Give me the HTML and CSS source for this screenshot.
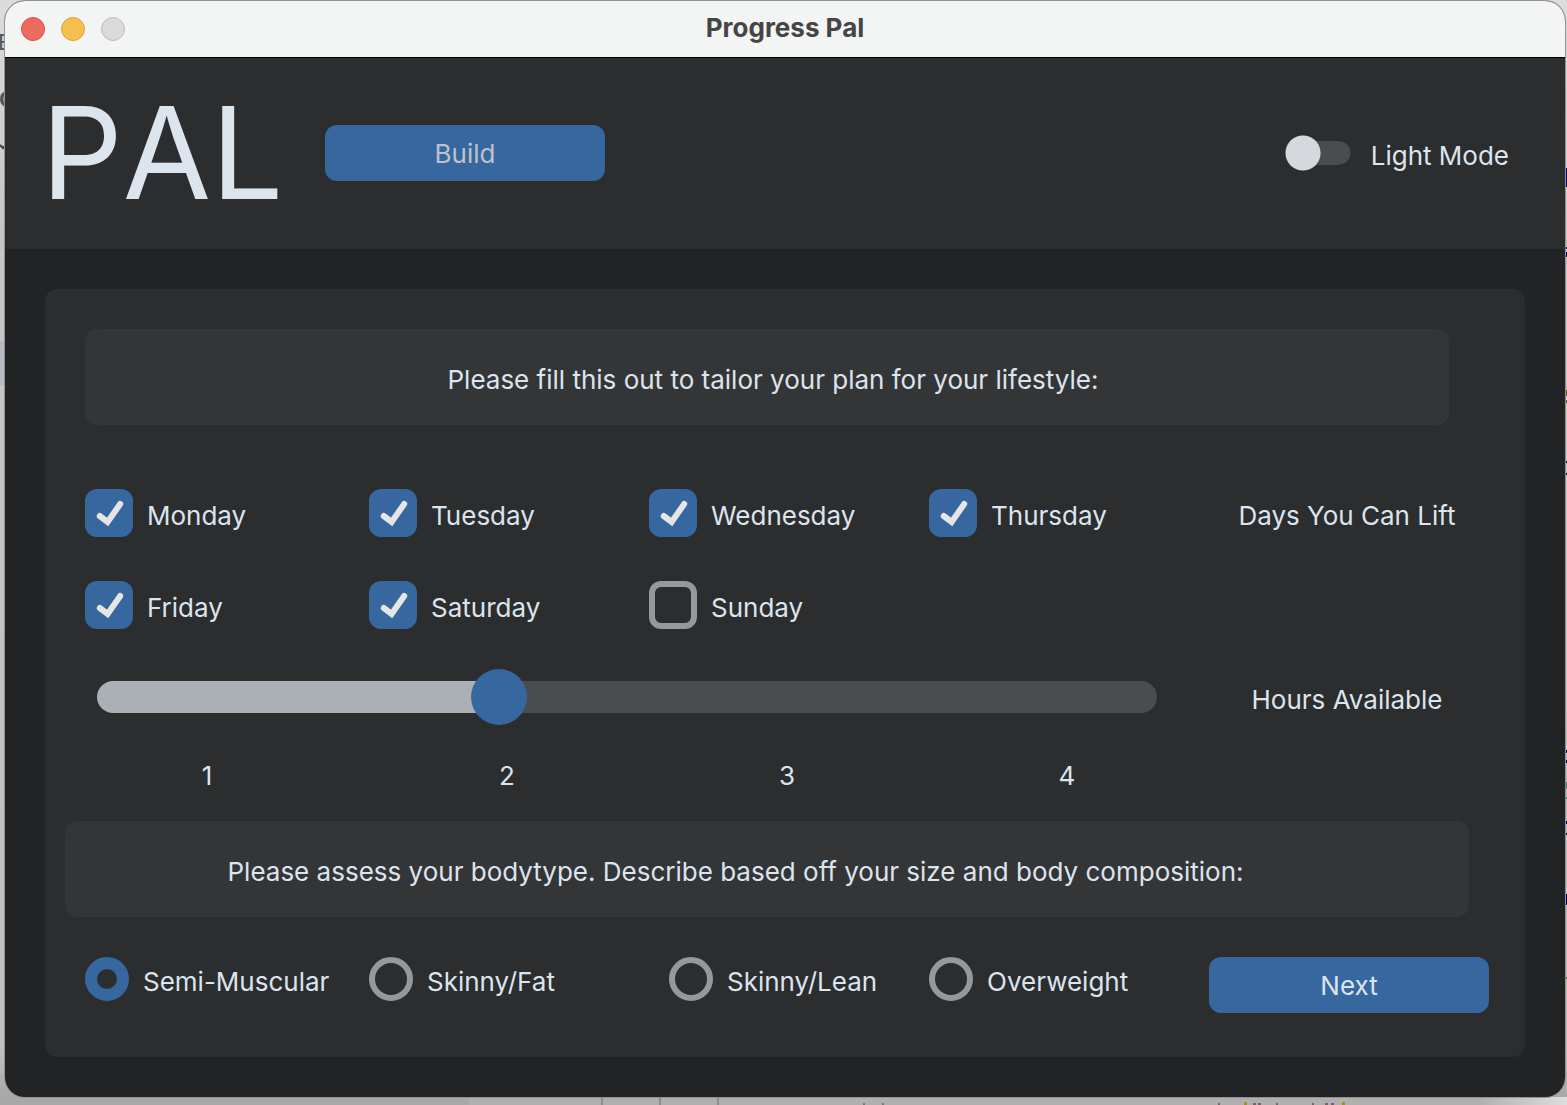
FILE: index.html
```html
<!DOCTYPE html>
<html lang="en">
<head>
<meta charset="utf-8">
<title>Progress Pal</title>
<link rel="stylesheet" href="styles.css">
</head>
<body>
<div class="backdrop" aria-hidden="true">
  <span class="peek peek-e">E</span>
  <span class="peek peek-c">C</span>
  <svg class="peek-chevron" width="5" height="8" viewBox="0 0 5 8"><path d="M0 2l3 3 3-3" fill="none" stroke="#444" stroke-width="2"/></svg>
  <div class="peek-selection"></div>
  <svg class="peek-right" width="2" height="860" viewBox="0 0 2 860">
    <path fill="#000055" d="M0 18h2v19H0zM0 97h2v2H0zM0 102h2v5H0zM0 311h2v2H0zM0 323h2v2H0zM0 600h2v3H0zM0 610h2v3H0zM0 671h2v3H0zM0 683h2v2H0zM0 744h2v11H0z"/>
    <path fill="#6b5528" d="M0 240h2v6H0zM0 250h2v3H0z"/>
    <path fill="#3d8060" d="M0 632h2v7H0zM0 647h2v2H0z"/>
    <path fill="#2f7a20" d="M0 827h2v2H0z"/>
  </svg>
  <div class="peek-editor"></div>
  <svg class="peek-bottom" width="900" height="8" viewBox="0 0 900 8">
    <path fill="#8c8c8c" d="M141 0h2v8h-2zM199 0h2v8h-2zM257 0h2v8h-2z"/>
    <path fill="#707a80" d="M403 6h2v2h-2zM422 6h2v2h-2z"/>
    <path fill="#a8901f" d="M784 5h3v3h-3zM882 5h3v3h-3z"/>
    <path fill="#806068" d="M758 6h2v2h-2zM793 6h3v2h-3zM798 6h3v2h-3zM816 6h2v2h-2zM852 6h2v2h-2zM865 6h3v2h-3zM871 6h3v2h-3z"/>
  </svg>
</div>
<main class="window">
  <div class="titlebar">
    <div class="lights">
      <button class="light light-close" aria-label="Close"></button>
      <button class="light light-min" aria-label="Minimize"></button>
      <button class="light light-zoom" aria-label="Zoom" disabled></button>
    </div>
    <div class="title">Progress Pal</div>
  </div>
  <header class="header">
    <h1 class="logo">PAL</h1>
    <button class="button button-build">Build</button>
    <label class="mode"><input class="switch" type="checkbox" role="switch"><span class="caption">Light Mode</span></label>
  </header>
  <form class="panel">
    <p class="banner banner-plan">Please fill this out to tailor your plan for your lifestyle:</p>
    <div class="grid days">
      <label class="option"><input class="check" type="checkbox" checked><span class="caption">Monday</span></label>
      <label class="option"><input class="check" type="checkbox" checked><span class="caption">Tuesday</span></label>
      <label class="option"><input class="check" type="checkbox" checked><span class="caption">Wednesday</span></label>
      <label class="option"><input class="check" type="checkbox" checked><span class="caption">Thursday</span></label>
      <span class="side caption">Days You Can Lift</span>
      <label class="option"><input class="check" type="checkbox" checked><span class="caption">Friday</span></label>
      <label class="option"><input class="check" type="checkbox" checked><span class="caption">Saturday</span></label>
      <label class="option"><input class="check" type="checkbox"><span class="caption">Sunday</span></label>
    </div>
    <div class="grid hours">
      <input class="slider" id="hours" type="range" min="0" max="1004" value="374">
      <label class="side caption" for="hours">Hours Available</label>
    </div>
    <div class="grid ticks">
      <span class="tick tick-first">1</span><span class="tick">2</span><span class="tick">3</span><span class="tick">4</span>
    </div>
    <p class="banner banner-body">Please assess your bodytype. Describe based off your size and body composition:</p>
    <div class="grid types">
      <label class="option"><input class="radio" type="radio" name="bodytype" checked><span class="caption">Semi-Muscular</span></label>
      <label class="option"><input class="radio" type="radio" name="bodytype"><span class="caption">Skinny/Fat</span></label>
      <label class="option"><input class="radio" type="radio" name="bodytype"><span class="caption">Skinny/Lean</span></label>
      <label class="option"><input class="radio" type="radio" name="bodytype"><span class="caption">Overweight</span></label>
      <button class="button" type="button">Next</button>
    </div>
  </form>
</main>
</body>
</html>
```
FILE: styles.css
```css
* { box-sizing: border-box; }

body {
  margin: 0;
  min-height: 100vh;
  padding: 1px 2px 8px 5px;
  display: flex;
  background: #c2c2c2;
  color: #dce4ee;
  font: 26px/32px Inter, "Liberation Sans", sans-serif;
  overflow: hidden;
}

/* slivers of the editor window behind */
.backdrop { position: absolute; inset: 0; overflow: hidden; background: linear-gradient(#dcdcdc, #c6c6c6 20%, #c0c0c0 95%, #a9a9a9 99%); }
.peek { position: absolute; color: #555; font-size: 22px; line-height: 24px; }
.peek-e { left: -2px; top: 30px; }
.peek-c { left: -1px; top: 87px; font-weight: 700; }
.peek-chevron { position: absolute; left: 0; top: 143px; }
.peek-selection { position: absolute; left: 0; top: 341px; width: 5px; height: 44px; background: #b9b9c6; }
.peek-right { position: absolute; right: 0; top: 150px; }
.peek-editor { position: absolute; left: 469px; right: 0; bottom: 0; height: 8px; background: linear-gradient(90deg, #b0b0b0 92%, #dedede); }
.peek-bottom { position: absolute; left: 460px; bottom: 0; }

.window {
  position: relative;
  flex: 1;
  display: flex;
  flex-direction: column;
  border-radius: 20px;
  overflow: hidden;
  background: #212325;
  box-shadow: 0 0 0 1px #929292;
}

.titlebar {
  display: grid;
  grid-template-columns: 1fr auto 1fr;
  align-items: center;
  height: 57px;
  padding: 0 16px 2px;
  background: #f3f4f4;
  border-bottom: 1px solid #000;
}
.lights { display: flex; gap: 16px; padding-top: 2px; }
.light { width: 24px; height: 24px; padding: 0; border: 1px solid; border-radius: 50%; }
.light-close { background: #ed6a5e; border-color: #d9544a; }
.light-min { background: #f5bf4f; border-color: #dca33a; }
.light-zoom { background: #d9dad9; border-color: #bdbebd; }
.title { color: #454545; font-weight: 700; }

.header {
  display: flex;
  align-items: center;
  height: 191px;
  padding: 0 56px 2px 36px;
  background: #2b2d2e;
}
.logo { margin: 0; width: 284px; font: 128px/144px Inter, "Liberation Sans", sans-serif; font-kerning: none; }

.button {
  width: 280px;
  height: 56px;
  padding: 2px 0 0;
  border: 0;
  border-radius: 12px;
  background: #36689f;
  color: #dce4ee;
  font: inherit;
}
.button-build { color: #bdc3ca; }

.mode { display: flex; align-items: center; gap: 20px; margin-left: auto; }
.caption { padding-top: 6px; white-space: nowrap; }
.switch {
  appearance: none;
  width: 66px;
  height: 36px;
  margin: 0;
  background:
    radial-gradient(circle at 18px 18px, #d5d9de 17px, transparent 18px),
    linear-gradient(#4b4c4f, #4b4c4f) 18px 6px / 36px 24px no-repeat,
    radial-gradient(circle at 54px 18px, #4b4c4f 11px, transparent 12px);
}

.panel {
  flex: 1;
  margin: 40px;
  padding: 40px 36px 40px 40px;
  border-radius: 12px;
  background: #2b2d2e;
}
.banner {
  margin: 0;
  padding: 35px 0 29px;
  border-radius: 12px;
  background: #343537;
  text-align: center;
}
.banner-plan { margin-right: 40px; padding-left: 12px; }
.banner-body { margin: 0 20px 40px -20px; padding-right: 63px; }

.grid { display: grid; grid-template-columns: 284fr 280fr 280fr 280fr 280fr; align-items: center; }
.days { row-gap: 44px; margin: 64px 0 40px; }
.option { display: flex; align-items: center; gap: 14px; }
.side { justify-self: center; padding-right: 4px; }

.check {
  appearance: none;
  width: 48px;
  height: 48px;
  margin: 0;
  border: 6px solid #94999d;
  border-radius: 12px;
}
.check:checked {
  border: 0;
  background: #36689f url("data:image/svg+xml,%3Csvg xmlns='http://www.w3.org/2000/svg' viewBox='0 0 48 48'%3E%3Cpath d='M14.8 27 22.6 33 35.2 15' fill='none' stroke='%23e5e5e5' stroke-width='6' stroke-linecap='round'/%3E%3C/svg%3E");
}

.slider {
  appearance: none;
  grid-column: span 4;
  height: 56px;
  margin: 0 52px 0 12px;
  background: transparent;
}
.slider::-webkit-slider-runnable-track {
  height: 32px;
  border-radius: 16px;
  background: linear-gradient(90deg, #aab0b5 38%, #4b4c4f 38%);
}
.slider::-webkit-slider-thumb {
  appearance: none;
  width: 56px;
  height: 56px;
  margin-top: -12px;
  border-radius: 50%;
  background: #36689f;
}

.ticks { padding: 35px 0 29px; }
.tick { text-align: center; padding-right: 4px; }
.tick-first { padding-right: 40px; }

.types { grid-template-columns: 284fr 300fr 260fr 280fr 280fr; align-items: start; }
.types .button { width: 100%; }
.radio {
  appearance: none;
  width: 44px;
  height: 44px;
  margin: 0;
  border: 6px solid #94999d;
  border-radius: 50%;
}
.radio:checked { border: 12px solid #36689f; }
```
